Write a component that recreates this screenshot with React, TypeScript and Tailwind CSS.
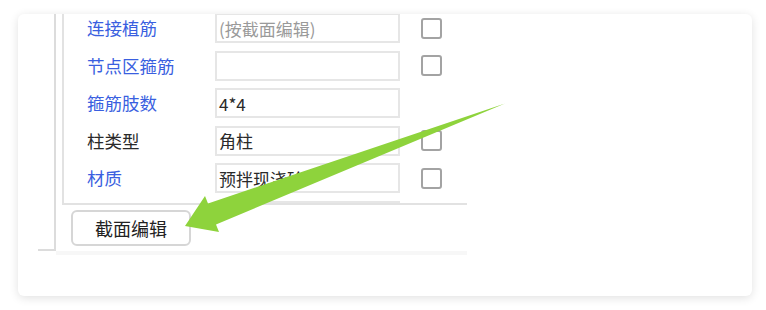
const rows = [
  { label: '连接植筋', blue: true, value: '(按截面编辑)', placeholder: true, check: true },
  { label: '节点区箍筋', blue: true, value: '', check: true },
  { label: '箍筋肢数', blue: true, value: '4*4', check: false },
  { label: '柱类型', blue: false, value: '角柱', check: true },
  { label: '材质', blue: true, value: '预拌现浇砼', check: true },
  { label: '', blue: false, value: '', check: false },
];

export default function App() {
  return (
    <div
      className="relative w-[766px] h-[310px] bg-white pt-[14px] pl-[18px] overflow-hidden"
      style={{ fontFamily: '"Microsoft YaHei", "Noto Sans CJK SC", "Noto Sans", sans-serif' }}
    >
      <div className="w-[734px] h-[282px] bg-white rounded-[6px] shadow-[0_2px_10px_rgba(0,0,0,0.12)] overflow-hidden flex items-start">
        {/* left group box edge */}
        <div className="ml-[20px] w-[18px] h-[237px] border-r-2 border-b-2 border-[#dcdcdc]" />

        <div className="w-[411px] flex flex-col">
          <div className="ml-[6px] h-[191px] border-l-2 border-b-2 border-[#e2e2e2] overflow-hidden">
            <div className="flex flex-col gap-[7.5px] -mt-[1px]">
              {rows.map((r, i) => (
                <div key={i} className="flex items-center h-[30px] shrink-0">
                  <div
                    className={`w-[151px] pl-[23px] text-[17.5px] leading-none ${
                      r.blue ? 'text-[#3a5fe0]' : 'text-[#2a2a2a]'
                    }`}
                  >
                    {r.label}
                  </div>
                  <div className="w-[185px] h-[30px] border-2 border-[#e6e6e6] bg-white flex items-center pl-[2px]">
                    <span
                      className={`text-[17px] leading-none ${
                        r.placeholder ? 'text-[#9a9a9a]' : 'text-[#2a2a2a]'
                      }`}
                    >
                      {r.value}
                    </span>
                  </div>
                  {r.check && (
                    <div className="ml-[21px] w-[21px] h-[21px] border-2 border-[#a3a3a3] rounded-[3px] bg-white" />
                  )}
                </div>
              ))}
            </div>
          </div>

          <div className="h-[46px] flex items-start pl-[15px] pt-[5px]">
            <button className="w-[120px] h-[36px] border-2 border-[#d6d6d6] rounded-[6px] bg-white text-[18px] text-[#222] leading-none">
              截面编辑
            </button>
          </div>
          <div className="h-[4px] bg-[#f7f7f7]" />
        </div>
      </div>

      <svg className="absolute inset-0 pointer-events-none" width="766" height="310" viewBox="0 0 766 310">
        <polygon
          points="185,226 205,196 208,203.5 505,103.5 216,224.5 219,232"
          fill="#8ed33c"
        />
      </svg>
    </div>
  );
}
